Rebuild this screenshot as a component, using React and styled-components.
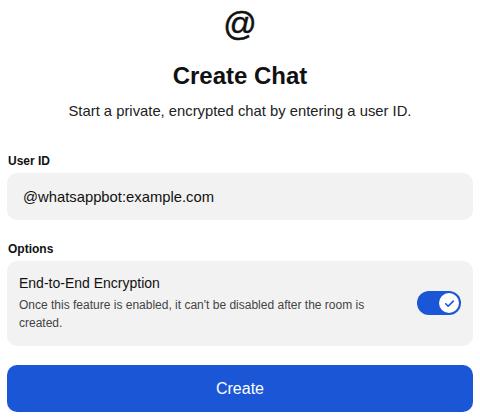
import React, { useState } from "react";
import styled, { createGlobalStyle } from "styled-components";

const GlobalStyle = createGlobalStyle`
  * { box-sizing: border-box; }
  body {
    margin: 0;
    background: #ffffff;
    font-family: "Liberation Sans", Arial, sans-serif;
    color: #111;
  }
`;

const Page = styled.div`
  width: 480px;
  padding: 4px 7px 8px 7px;
  display: flex;
  flex-direction: column;
`;

const Header = styled.div`
  display: flex;
  flex-direction: column;
  align-items: center;
`;

const AtMark = styled.div`
  font-size: 33px;
  line-height: 40px;
  height: 40px;
  color: #111;
  -webkit-text-stroke: 0.5px #111;
`;

const Title = styled.h1`
  margin: 18px 0 0;
  font-size: 24px;
  line-height: 28px;
  font-weight: 700;
`;

const Subtitle = styled.p`
  margin: 12px 0 0;
  font-size: 14.8px;
  line-height: 18px;
  color: #222;
`;

const Label = styled.div`
  margin-top: ${(p) => p.$top}px;
  font-size: 12px;
  line-height: 14px;
  font-weight: 700;
  padding-left: 1px;
`;

const Input = styled.input`
  margin-top: 5px;
  height: 47px;
  border: none;
  outline: none;
  border-radius: 10px;
  background: #f2f2f2;
  padding: 0 16px;
  font-family: inherit;
  font-size: 14.8px;
  color: #111;
`;

const OptionCard = styled.div`
  margin-top: 5px;
  background: #f2f2f2;
  border-radius: 10px;
  padding: 13px 12px 14px 12px;
  display: flex;
  align-items: center;
  gap: 16px;
`;

const OptionText = styled.div`
  flex: 1;
`;

const OptionTitle = styled.div`
  font-size: 14px;
  line-height: 18px;
  color: #111;
`;

const OptionDesc = styled.div`
  margin-top: 4px;
  font-size: 12px;
  line-height: 18px;
  color: #444;
  padding-right: 20px;
`;

const Toggle = styled.button`
  flex: none;
  width: 44px;
  height: 24px;
  border: none;
  padding: 2px;
  border-radius: 12px;
  background: ${(p) => (p.$on ? "#1a56d6" : "#bbb")};
  display: flex;
  justify-content: ${(p) => (p.$on ? "flex-end" : "flex-start")};
  align-items: center;
  cursor: pointer;
`;

const Knob = styled.span`
  width: 20px;
  height: 20px;
  border-radius: 50%;
  background: #fff;
  display: flex;
  align-items: center;
  justify-content: center;
`;

const CreateButton = styled.button`
  margin-top: 19px;
  height: 47px;
  border: none;
  border-radius: 10px;
  background: #1a56d6;
  color: #fff;
  font-family: inherit;
  font-size: 16px;
  cursor: pointer;
`;

export default function App() {
  const [on, setOn] = useState(true);
  return (
    <Page>
      <GlobalStyle />
      <Header>
        <AtMark>@</AtMark>
        <Title>Create Chat</Title>
        <Subtitle>Start a private, encrypted chat by entering a user ID.</Subtitle>
      </Header>

      <Label $top={34}>User ID</Label>
      <Input defaultValue="@whatsappbot:example.com" />

      <Label $top={22}>Options</Label>
      <OptionCard>
        <OptionText>
          <OptionTitle>End-to-End Encryption</OptionTitle>
          <OptionDesc>
            Once this feature is enabled, it can't be disabled after the room is created.
          </OptionDesc>
        </OptionText>
        <Toggle $on={on} onClick={() => setOn(!on)}>
          <Knob>
            {on && (
              <svg width="13" height="13" viewBox="0 0 24 24" fill="none" stroke="#1a56d6" strokeWidth="3" strokeLinecap="round" strokeLinejoin="round">
                <path d="M5 12.5l4.5 4.5L19 7.5" />
              </svg>
            )}
          </Knob>
        </Toggle>
      </OptionCard>

      <CreateButton>Create</CreateButton>
    </Page>
  );
}
